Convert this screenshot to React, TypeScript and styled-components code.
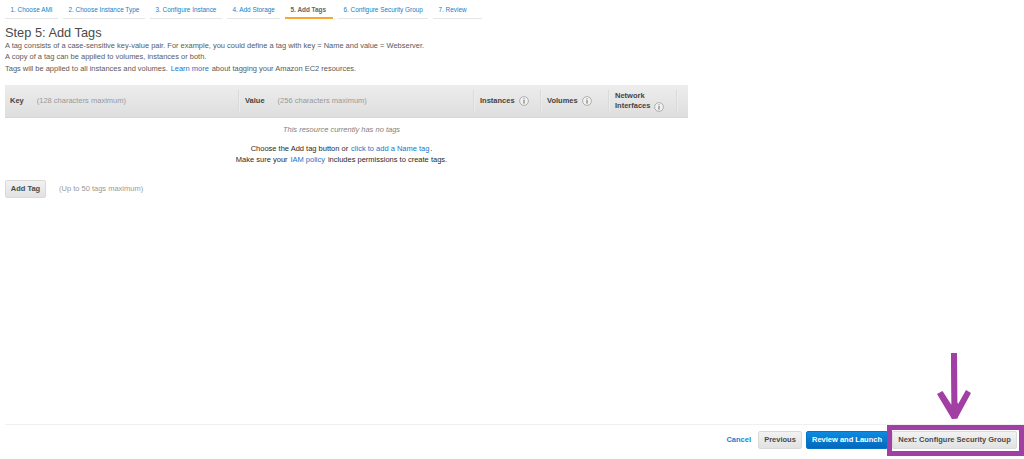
import React from "react";
import styled, { createGlobalStyle } from "styled-components";

const GlobalStyle = createGlobalStyle`
  * { box-sizing: border-box; }
  body {
    margin: 0;
    background: #fff;
    color: #5a5a5a;
    font: 7.5px/11.3px "Liberation Sans", Arial, sans-serif;
    overflow: hidden;
  }
`;

const Page = styled.div`
  position: relative;
  display: flex;
  flex-direction: column;
  width: 1024px;
  height: 459px;
`;

const Steps = styled.nav`
  display: flex;
  gap: 5px;
  padding-left: 5px;
  height: 19px;
`;

const Step = styled.a<{ $width: number; $active?: boolean }>`
  width: ${(p) => p.$width}px;
  height: 19px;
  padding: 4px 0 0 5.5px;
  white-space: nowrap;
  font-size: 6.42px;
  font-weight: ${(p) => (p.$active ? "bold" : "normal")};
  color: ${(p) => (p.$active ? "#666" : "#1580c4")};
  border-bottom: ${(p) => (p.$active ? "2px solid #fba62f" : "1px solid #e6e6e6")};
`;

const Intro = styled.header`
  padding: 7px 0 0 5px;
  height: 66px;
  font-size: 7.47px;
`;

const Title = styled.h1`
  margin: 0;
  font-size: 12.8px;
  line-height: 14px;
  font-weight: normal;
  color: #4a4a4a;
`;

const Line = styled.p`
  margin: 0;
  white-space: nowrap;
`;

const Link = styled.a`
  color: #1b75c9;
  margin: 0 0.8px;
`;

const TableHead = styled.div`
  display: flex;
  align-items: center;
  width: 683px;
  height: 33px;
  margin-left: 5px;
  background: linear-gradient(#ededed, #dedede);
  border-bottom: 1px solid #d6d6d6;
`;

const Column = styled.div<{ $width: number; $pad?: number }>`
  display: flex;
  align-items: center;
  flex: none;
  width: ${(p) => p.$width}px;
  height: 22px;
  padding-left: ${(p) => p.$pad ?? 6}px;
  border-right: 1px solid #dadada;
  box-shadow: 1px 0 #ececec;
  font-weight: bold;
  line-height: 10px;
  color: #444;
  white-space: nowrap;
`;

const Hint = styled.span`
  margin-left: 13px;
  font-weight: normal;
  color: #999;
`;

const InfoSvg = styled.svg<{ $drop?: boolean }>`
  width: 10px;
  height: 10px;
  margin-left: 4px;
  flex: none;
  align-self: ${(p) => (p.$drop ? "flex-end" : "center")};
`;

const Info = ({ drop }: { drop?: boolean }) => (
  <InfoSvg $drop={drop} viewBox="0 0 10 10">
    <circle cx="5" cy="5" r="4.4" fill="#f1f1f1" stroke="#a0a0a0" strokeWidth=".8" />
    <path d="M5 4.1V7.6M5 2.4V3.3" stroke="#555" strokeWidth=".9" />
  </InfoSvg>
);

const Empty = styled.section`
  width: 683px;
  padding-top: 6px;
  height: 62px;
  text-align: center;
  color: #2a2a2a;
`;

const NoTags = styled.p`
  margin: 0 0 7.5px;
  font-style: italic;
  color: #808080;
`;

const AddRow = styled.div`
  display: flex;
  align-items: center;
  padding-left: 5px;
`;

const Button = styled.button<{ $width: number; $primary?: boolean }>`
  flex: none;
  width: ${(p) => p.$width}px;
  height: 18px;
  padding: 0;
  font: bold 7.5px/16px "Liberation Sans", Arial, sans-serif;
  white-space: nowrap;
  color: ${(p) => (p.$primary ? "#fff" : "#4a4a4a")};
  background: ${(p) => (p.$primary ? "linear-gradient(#0c8be0, #0468bd)" : "linear-gradient(#f2f2f2, #e2e2e2)")};
  border: 1px solid ${(p) => (p.$primary ? "#0872c4" : "#dadada")};
  border-radius: 2px;
`;

const Footer = styled.footer`
  display: flex;
  align-items: center;
  justify-content: flex-end;
  margin: auto 0 0 5px;
  height: 35px;
  padding: 0 7px 5px 0;
  border-top: 1px solid #f0f0f0;
`;

const Cancel = styled.a`
  margin-right: 7px;
  font-weight: bold;
  color: #1283d4;
`;

const Actions = styled.div`
  display: flex;
  gap: 4px;
`;

const Highlight = styled.div`
  position: absolute;
  left: 887px;
  top: 425px;
  width: 137px;
  height: 31px;
  border: 5px solid #a23fa5;
`;

const Arrow = styled.svg`
  position: absolute;
  left: 930px;
  top: 348px;
  width: 48px;
  height: 75px;
`;

const steps = [
  { label: "1. Choose AMI", width: 53 },
  { label: "2. Choose Instance Type", width: 82 },
  { label: "3. Configure Instance", width: 72 },
  { label: "4. Add Storage", width: 53 },
  { label: "5. Add Tags", width: 48, active: true },
  { label: "6. Configure Security Group", width: 90 },
  { label: "7. Review", width: 49 },
];

export default function App() {
  return (
    <>
      <GlobalStyle />
      <Page>
        <Steps>
          {steps.map((s) => (
            <Step key={s.label} $width={s.width} $active={s.active}>
              {s.label}
            </Step>
          ))}
        </Steps>
        <Intro>
          <Title>Step 5: Add Tags</Title>
          <Line>
            A tag consists of a case-sensitive key-value pair. For example, you could define a tag with key = Name and
            value = Webserver.
          </Line>
          <Line>A copy of a tag can be applied to volumes, instances or both.</Line>
          <Line>
            Tags will be applied to all instances and volumes. <Link>Learn more</Link> about tagging your Amazon EC2
            resources.
          </Line>
        </Intro>
        <TableHead>
          <Column $width={234} $pad={5}>
            Key<Hint>(128 characters maximum)</Hint>
          </Column>
          <Column $width={235}>
            Value<Hint>(256 characters maximum)</Hint>
          </Column>
          <Column $width={67}>
            Instances
            <Info />
          </Column>
          <Column $width={68}>
            Volumes
            <Info />
          </Column>
          <Column $width={68}>
            <span>
              Network
              <br />
              Interfaces
            </span>
            <Info drop />
          </Column>
        </TableHead>
        <Empty>
          <NoTags>This resource currently has no tags</NoTags>
          <Line>
            Choose the Add tag button or <Link>click to add a Name tag</Link>.
          </Line>
          <Line>
            Make sure your <Link>IAM policy</Link> includes permissions to create tags.
          </Line>
        </Empty>
        <AddRow>
          <Button $width={41}>Add Tag</Button>
          <Hint>(Up to 50 tags maximum)</Hint>
        </AddRow>
        <Footer>
          <Cancel>Cancel</Cancel>
          <Actions>
            <Button $width={44}>Previous</Button>
            <Button $width={82} $primary>
              Review and Launch
            </Button>
            <Button $width={125}>Next: Configure Security Group</Button>
          </Actions>
        </Footer>
        <Highlight />
        <Arrow viewBox="0 0 48 75" fill="#a23fa5">
          <path d="M21 5H27V58L36 42L41 45L27.5 70L22 71L7 46L12.5 43L21.500 57Z" />
          <path d="M21 5H27L27.500 70L22 71Z" />
          <path d="M20 59L25 52L30 58L27.500 70.500H21.700Z" />
        </Arrow>
      </Page>
    </>
  );
}
